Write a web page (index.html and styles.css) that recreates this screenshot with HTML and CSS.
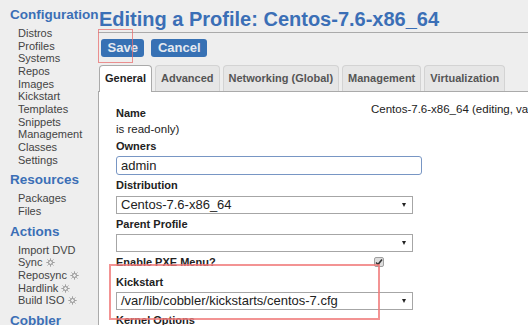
FILE: index.html
```html
<!DOCTYPE html>
<html lang="en">
<head>
  <meta charset="UTF-8" />
  <title>Cobbler - Editing a Profile</title>
  <link rel="stylesheet" href="styles.css">
</head>
<body>

<div class="page">
  <div id="sidebar">
    <h3>Configuration</h3>
    <ul>
      <li>Distros</li>
      <li>Profiles</li>
      <li>Systems</li>
      <li>Repos</li>
      <li>Images</li>
      <li>Kickstart</li>
      <li>Templates</li>
      <li>Snippets</li>
      <li>Management</li>
      <li>Classes</li>
      <li>Settings</li>
    </ul>
    <h3>Resources</h3>
    <ul>
      <li>Packages</li>
      <li>Files</li>
    </ul>
    <h3>Actions</h3>
    <ul>
      <li>Import DVD</li>
      <li>Sync <svg class="sun" viewBox="0 0 10 10"><circle cx="5" cy="5" r="2.2"/><path d="M5 0.5V2M5 8V9.5M0.5 5H2M8 5H9.5M1.8 1.8L2.9 2.9M7.1 7.1L8.2 8.2M1.8 8.2L2.9 7.1M7.1 2.9L8.2 1.8"/></svg></li>
      <li>Reposync <svg class="sun" viewBox="0 0 10 10"><circle cx="5" cy="5" r="2.2"/><path d="M5 0.5V2M5 8V9.5M0.5 5H2M8 5H9.5M1.8 1.8L2.9 2.9M7.1 7.1L8.2 8.2M1.8 8.2L2.9 7.1M7.1 2.9L8.2 1.8"/></svg></li>
      <li>Hardlink <svg class="sun" viewBox="0 0 10 10"><circle cx="5" cy="5" r="2.2"/><path d="M5 0.5V2M5 8V9.5M0.5 5H2M8 5H9.5M1.8 1.8L2.9 2.9M7.1 7.1L8.2 8.2M1.8 8.2L2.9 7.1M7.1 2.9L8.2 1.8"/></svg></li>
      <li>Build ISO <svg class="sun" viewBox="0 0 10 10"><circle cx="5" cy="5" r="2.2"/><path d="M5 0.5V2M5 8V9.5M0.5 5H2M8 5H9.5M1.8 1.8L2.9 2.9M7.1 7.1L8.2 8.2M1.8 8.2L2.9 7.1M7.1 2.9L8.2 1.8"/></svg></li>
    </ul>
    <h3>Cobbler</h3>
  </div>

  <div id="main">
    <h1>Editing a Profile: Centos-7.6-x86_64</h1>
    <div class="actions">
      <button>Save</button>
      <button>Cancel</button>
    </div>

    <ul class="tabs">
      <li class="active">General</li>
      <li>Advanced</li>
      <li>Networking (Global)</li>
      <li>Management</li>
      <li>Virtualization</li>
    </ul>

    <div class="panel">
      <div class="name-row">
        <label class="name-label">Name</label>
        <span class="name-value">Centos-7.6-x86_64 (editing, value</span>
      </div>
      <div class="readonly">is read-only)</div>

      <div class="field">
        <label>Owners</label>
        <input type="text" value="admin" />
      </div>
      <div class="field">
        <label>Distribution</label>
        <div class="select"><span>Centos-7.6-x86_64</span><i class="arrow"></i></div>
      </div>
      <div class="field">
        <label>Parent Profile</label>
        <div class="select"><span></span><i class="arrow"></i></div>
      </div>
      <div class="check-row">
        <label>Enable PXE Menu?</label>
        <span class="checkbox">
          <svg width="8" height="8" viewBox="0 0 8 8"><path d="M1 4.5 L3 6.5 L7 1.5" fill="none" stroke="#333" stroke-width="1.6"/></svg>
        </span>
      </div>
      <div class="field">
        <label>Kickstart</label>
        <div class="select"><span>/var/lib/cobbler/kickstarts/centos-7.cfg</span><i class="arrow"></i></div>
      </div>
      <div class="field">
        <label>Kernel Options</label>
      </div>
    </div>
  </div>

  <!-- review markers drawn over the screenshot -->
  <div class="mark mark-save"></div>
  <div class="mark mark-kickstart"></div>
</div>

</body>
</html>
```

FILE: styles.css
```css
* { box-sizing: border-box; }
html, body {
  margin: 0;
  overflow: hidden;
  background-color: #eeeeee;
  font-family: "Liberation Sans", Arial, sans-serif;
  color: #222;
}
.page {
  position: relative;
  display: flex;
  width: 620px;
  min-height: 325px;
}

/* sidebar */
#sidebar {
  width: 98px;
  flex: none;
  padding: 7px 0 0 10px;
}
#sidebar h3 {
  margin: 6px 0 4px;
  font-size: 13.5px;
  line-height: 16px;
  color: #3b6fb6;
  white-space: nowrap;
}
#sidebar h3:first-child { margin-top: 0; }
#sidebar ul {
  list-style: none;
  margin: 0;
  padding-left: 8px;
}
#sidebar li {
  font-size: 11px;
  line-height: 12.65px;
  color: #444;
  white-space: nowrap;
}
.sun {
  width: 9px;
  height: 9px;
  vertical-align: -1px;
  fill: none;
  stroke: #777;
  stroke-width: 0.9;
}

/* main column */
#main {
  flex: 1;
  padding-top: 7px;
}
h1 {
  margin: 0;
  padding: 0 0 1px 1px;
  font-size: 20px;
  line-height: 24px;
  color: #3b6fb6;
  border-bottom: 1px solid #aaa;
  white-space: nowrap;
}
.actions {
  display: flex;
  gap: 7px;
  margin-top: 6px;
  padding-left: 3px;
}
button {
  height: 18px;
  padding: 0 6.5px;
  font-family: "Liberation Sans", Arial, sans-serif;
  font-size: 13px;
  font-weight: bold;
  line-height: 18px;
  border: none;
  border-radius: 3px;
  color: #e4e9f0;
  background-color: #3771b4;
}

.tabs {
  display: flex;
  align-items: flex-end;
  gap: 3px;
  list-style: none;
  margin: 8px 0 0;
  padding-left: 1px;
}
.tabs li {
  padding: 0 5px;
  font-size: 11px;
  font-weight: bold;
  line-height: 25px;
  color: #555;
  background-color: #e6e6e6;
  border: 1px solid #d3d3d3;
  border-bottom: none;
  border-radius: 4px 4px 0 0;
  white-space: nowrap;
}
.tabs li.active {
  color: #212121;
  background-color: #fff;
  border-color: #aaa;
  margin-bottom: -1px;
  padding-bottom: 1px;
  position: relative;
}

.panel {
  background-color: #fff;
  border-top: 1px solid #aaa;
  border-left: 1px solid #aaa;
  padding: 9.5px 0 20px 17px;
  font-size: 11px;
}
.panel label {
  display: block;
  font-weight: bold;
  line-height: 14px;
}
.name-row {
  display: flex;
  align-items: flex-start;
}
.name-row .name-label {
  width: 255px;
  flex: none;
  margin-top: 4px;
}
.name-value {
  font-size: 11.5px;
  line-height: 14px;
  white-space: nowrap;
}
.readonly {
  margin: 2.7px 0 2.5px;
  font-size: 11.5px;
  line-height: 14px;
}
.field { margin-bottom: 3px; }
.field label { margin-bottom: 3.5px; }
.field input {
  display: block;
  width: 306px;
  height: 19px;
  padding: 0 4px;
  font-family: "Liberation Sans", Arial, sans-serif;
  font-size: 13px;
  color: #222;
  border: 1px solid #7896c4;
  border-radius: 3px;
  outline: none;
}
.select {
  display: flex;
  align-items: center;
  justify-content: space-between;
  width: 297px;
  height: 18px;
  padding: 0 6px 0 4px;
  font-size: 13px;
  line-height: 16px;
  border: 1px solid #a6a6a6;
  background-color: #fff;
  white-space: nowrap;
}
.arrow {
  width: 0;
  height: 0;
  border-left: 2.5px solid transparent;
  border-right: 2.5px solid transparent;
  border-top: 4px solid #222;
}
.check-row {
  display: flex;
  align-items: center;
  margin-bottom: 5.7px;
}
.check-row label { width: 258px; }
.checkbox {
  display: flex;
  align-items: center;
  justify-content: center;
  width: 10px;
  height: 10px;
  background-color: #ddd;
  border: 1px solid #a0a0a0;
  border-radius: 2px;
}

/* annotation rectangles */
.mark {
  position: absolute;
  pointer-events: none;
}
.mark-save {
  left: 98px;
  top: 29px;
  width: 35px;
  height: 34px;
  border: 1.5px solid rgba(232, 110, 110, 0.75);
}
.mark-kickstart {
  left: 109px;
  top: 264px;
  width: 271px;
  height: 56px;
  border: 2px solid rgba(240, 120, 120, 0.8);
}
```
